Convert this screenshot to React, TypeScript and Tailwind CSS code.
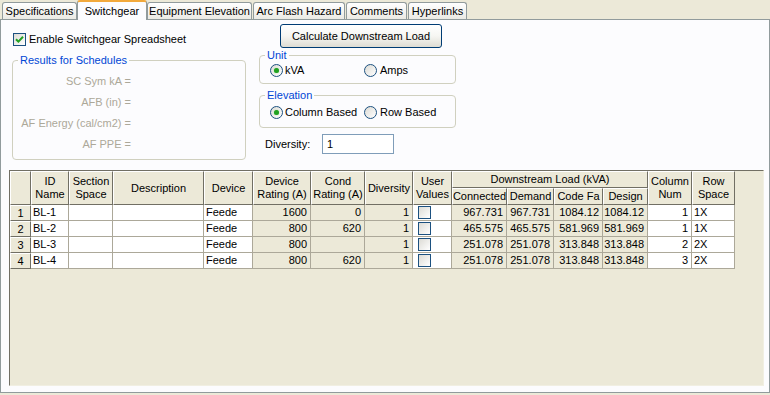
import React from 'react';

const font = "font-['Liberation_Sans',Arial,sans-serif]";

const Tab: React.FC<{ label: string; w: string; active?: boolean; ml?: string }> = ({ label, w, active, ml }) => {
  if (active) {
    return (
      <div className={`${w} ${ml ?? ''} relative z-10 -mb-px h-[20px] bg-[#fcfcfe] border border-b-0 border-[#919b9c] border-t-2 border-t-[#f2a93b] rounded-t-[3px] flex items-start justify-center pt-[1px]`}>
        {label}
      </div>
    );
  }
  return (
    <div className={`${w} ${ml ?? ''} h-[17px] bg-gradient-to-b from-white to-[#ebeae4] border border-b-0 border-[#919b9c] rounded-t-[3px] flex items-center justify-center pt-[1px]`}>
      {label}
    </div>
  );
};

const Check: React.FC<{ checked?: boolean }> = ({ checked }) => (
  <div className="w-[13px] h-[13px] border border-[#1c5180] bg-gradient-to-br from-[#dcdbd5] to-white flex items-center justify-center shrink-0">
    {checked && (
      <svg width="9" height="9" viewBox="0 0 9 9">
        <path d="M1 4.2 L3.4 6.6 L8 1.8" stroke="#21a121" strokeWidth="2" fill="none" />
      </svg>
    )}
  </div>
);

const Radio: React.FC<{ checked?: boolean }> = ({ checked }) => (
  <div className="w-[13px] h-[13px] rounded-full border border-[#1c5180] bg-gradient-to-br from-[#dcdbd5] to-white flex items-center justify-center shrink-0">
    {checked && <div className="w-[5px] h-[5px] rounded-full bg-[#21a121] shadow-[0_0_1px_#6fd66f]" />}
  </div>
);

const GroupBox: React.FC<{ title: string; className: string; children: React.ReactNode }> = ({ title, className, children }) => (
  <fieldset className={`border border-[#d0d0bf] rounded-[4px] ${className}`}>
    <legend className="ml-[5px] px-[2px] leading-[13px] text-[#0046d5]">{title}</legend>
    {children}
  </fieldset>
);

type Col = { align: 'left' | 'right' | 'center'; bg: string };

const cols: Col[] = [
  { align: 'left', bg: 'bg-white' },
  { align: 'left', bg: 'bg-white' },
  { align: 'left', bg: 'bg-white' },
  { align: 'left', bg: 'bg-white' },
  { align: 'right', bg: 'bg-[#ece9d8]' },
  { align: 'right', bg: 'bg-[#ece9d8]' },
  { align: 'right', bg: 'bg-[#ece9d8]' },
  { align: 'center', bg: 'bg-white' },
  { align: 'right', bg: 'bg-[#ece9d8]' },
  { align: 'right', bg: 'bg-[#ece9d8]' },
  { align: 'right', bg: 'bg-[#ece9d8]' },
  { align: 'right', bg: 'bg-[#ece9d8]' },
  { align: 'right', bg: 'bg-white' },
  { align: 'left', bg: 'bg-white' },
];

const rows: string[][] = [
  ['BL-1', '', '', 'Feede', '1600', '0', '1', 'chk', '967.731', '967.731', '1084.12', '1084.12', '1', '1X'],
  ['BL-2', '', '', 'Feede', '800', '620', '1', 'chk', '465.575', '465.575', '581.969', '581.969', '1', '1X'],
  ['BL-3', '', '', 'Feede', '800', '', '1', 'chk', '251.078', '251.078', '313.848', '313.848', '2', '2X'],
  ['BL-4', '', '', 'Feede', '800', '620', '1', 'chk', '251.078', '251.078', '313.848', '313.848', '3', '2X'],
];

const hdr =
  'flex items-center justify-center text-center leading-[13px] bg-[#ece9d8] border border-t-white border-l-white border-r-[#716f64] border-b-[#716f64] overflow-hidden whitespace-nowrap';

const App: React.FC = () => {
  return (
    <div className={`${font} text-[11px] text-black w-[770px] h-[395px] bg-[#ece9d8] overflow-hidden`}>
      {/* Tabs */}
      <div className="flex items-end h-[19px]">
        <Tab label="Specifications" w="w-[75px]" ml="ml-[2px]" />
        <Tab label="Switchgear" w="w-[70px]" active />
        <Tab label="Equipment Elevation" w="w-[105px]" />
        <Tab label="Arc Flash Hazard" w="w-[92px]" ml="ml-[1px]" />
        <Tab label="Comments" w="w-[61px]" ml="ml-[1px]" />
        <Tab label="Hyperlinks" w="w-[59px]" ml="ml-[1px]" />
      </div>

      {/* Panel */}
      <div className="w-[770px] h-[374px] border border-[#919b9c] bg-[#fcfcfe]">
        <div className="flex h-[150px]">
          {/* Left column */}
          <div className="w-[246px] pl-[11px] flex flex-col">
            <div className="mt-[13px] h-[13px] flex items-center gap-[3px] pl-px">
              <Check checked />
              <span>Enable Switchgear Spreadsheet</span>
            </div>
            <GroupBox title="Results for Schedules" className="mt-[8px] h-[106px] w-[234px]">
              <div className="w-[118px] flex flex-col items-end text-[#aca899] pt-[8px] gap-[8px] leading-[13px]">
                <span>SC Sym kA =</span>
                <span>AFB (in) =</span>
                <span>AF Energy (cal/cm2) =</span>
                <span>AF PPE =</span>
              </div>
            </GroupBox>
          </div>

          {/* Right column */}
          <div className="ml-[12px] w-[197px] flex flex-col">
            <button className="ml-[21px] mt-[4px] w-[162px] h-[24px] border border-[#003c74] rounded-[3px] bg-gradient-to-b from-white via-[#f6f6f2] to-[#dedcd3] text-[11px]">
              Calculate Downstream Load
            </button>
            <GroupBox title="Unit" className="mt-[1px] h-[35px] w-[197px]">
              <div className="flex items-center h-[19px] pl-[10px] pb-[2px]">
                <div className="flex items-center gap-[2px] w-[94px]">
                  <Radio checked />
                  <span>kVA</span>
                </div>
                <div className="flex items-center gap-[3px]">
                  <Radio />
                  <span>Amps</span>
                </div>
              </div>
            </GroupBox>
            <GroupBox title="Elevation" className="mt-[5px] h-[39px] w-[197px]">
              <div className="flex items-center h-[22px] pl-[10px] pb-[2px]">
                <div className="flex items-center gap-[2px] w-[94px]">
                  <Radio checked />
                  <span>Column Based</span>
                </div>
                <div className="flex items-center gap-[3px]">
                  <Radio />
                  <span>Row Based</span>
                </div>
              </div>
            </GroupBox>
            <div className="mt-[6px] flex items-center h-[20px] pl-[6px]">
              <span className="w-[57px]">Diversity:</span>
              <div className="w-[72px] h-[20px] border border-[#7f9db9] bg-white flex items-center pl-[4px]">1</div>
            </div>
          </div>
        </div>

        {/* Grid */}
        <div className="ml-[8px] w-[755px] h-[216px] border-l border-t border-[#716f64] border-r border-b border-r-[#f1efe2] border-b-[#f1efe2] bg-[#ece9d8]">
          <div className="grid grid-cols-[21px_38px_44px_91px_49px_58px_54px_48px_39px_55px_47px_49px_45px_44px_43px] grid-rows-[17px_17px_16px_16px_16px_16px] w-max">
            <div className={`${hdr} row-span-2`} />
            <div className={`${hdr} row-span-2`}>ID<br />Name</div>
            <div className={`${hdr} row-span-2`}>Section<br />Space</div>
            <div className={`${hdr} row-span-2`}>Description</div>
            <div className={`${hdr} row-span-2`}>Device</div>
            <div className={`${hdr} row-span-2`}>Device<br />Rating (A)</div>
            <div className={`${hdr} row-span-2`}>Cond<br />Rating (A)</div>
            <div className={`${hdr} row-span-2`}>Diversity</div>
            <div className={`${hdr} row-span-2`}>User<br />Values</div>
            <div className={`${hdr} col-span-4`}>Downstream Load (kVA)</div>
            <div className={`${hdr} row-span-2`}>Column<br />Num</div>
            <div className={`${hdr} row-span-2`}>Row<br />Space</div>
            <div className={hdr}>Connected</div>
            <div className={hdr}>Demand</div>
            <div className={hdr}>Code Fa</div>
            <div className={hdr}>Design</div>

            {rows.map((r, i) => (
              <React.Fragment key={i}>
                <div className={hdr}>{i + 1}</div>
                {r.map((v, j) => {
                  const c = cols[j];
                  const just = c.align === 'right' ? 'justify-end pr-[3px]' : c.align === 'center' ? 'justify-start pl-[5px]' : 'justify-start pl-[2px]';
                  return (
                    <div
                      key={j}
                      className={`${c.bg} ${just} flex items-center border-r border-b border-[#aca899] leading-none whitespace-nowrap overflow-hidden`}
                    >
                      {v === 'chk' ? <Check /> : v}
                    </div>
                  );
                })}
              </React.Fragment>
            ))}
          </div>
        </div>
      </div>
    </div>
  );
};

export default App;
